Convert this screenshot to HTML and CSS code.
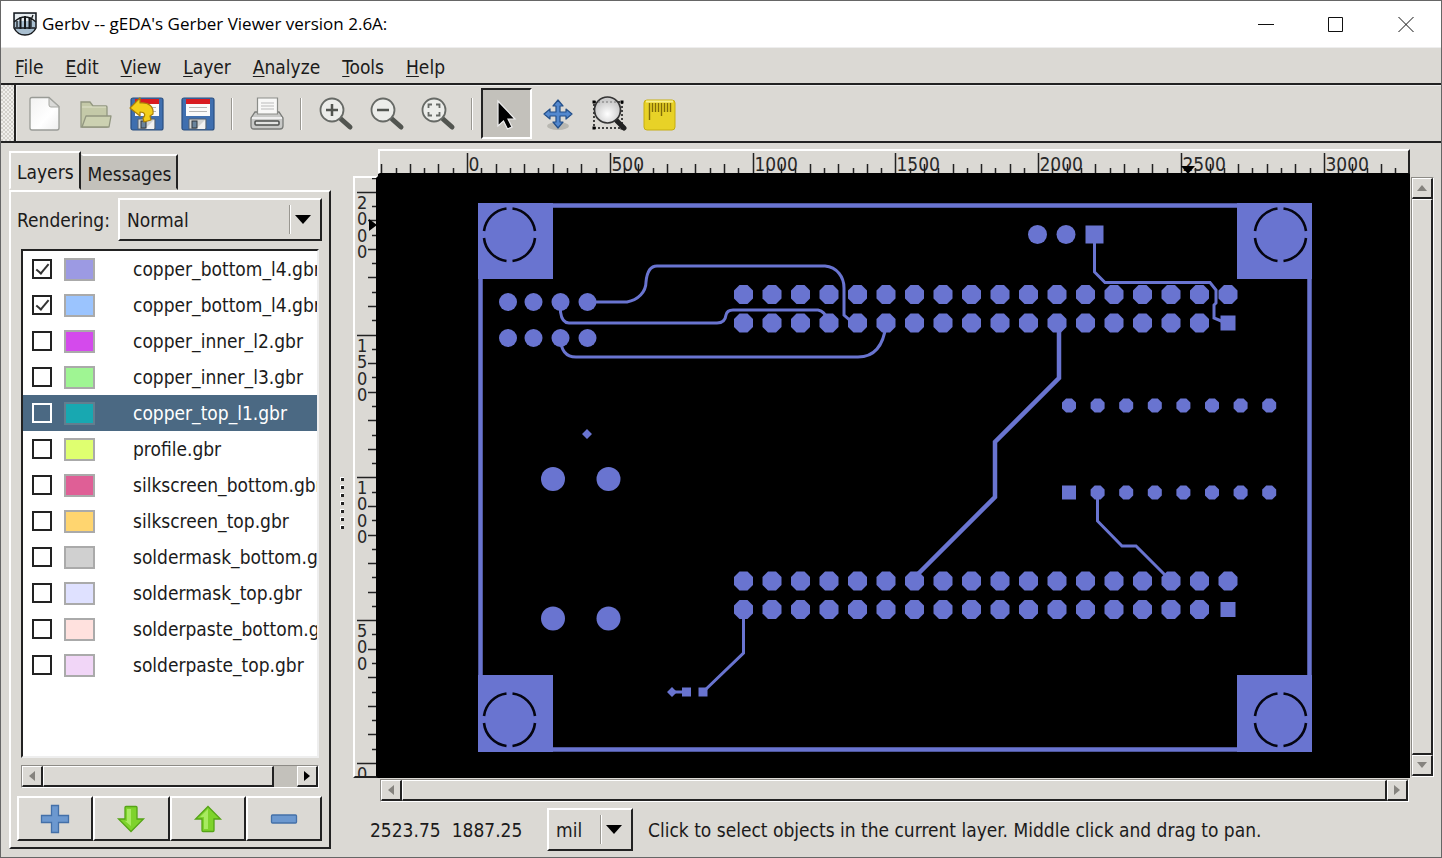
FILE: index.html
```html
<!DOCTYPE html>
<html lang="en">
<head>
<meta charset="utf-8">
<title>Gerbv</title>
<link rel="stylesheet" href="styles.css">
</head>
<body>
<div class="window">
  <header class="titlebar">
    <svg class="app-icon" width="24" height="24" viewBox="0 0 24 24"><path d="M1 1h22v15c-2 4-6 7-11 7S3 20 1 16z" fill="#a9bfd0" stroke="#16191c" stroke-width="1.5"/><path d="M2 2h20v7H2z" fill="#e8edf0"/><path d="M1 10Q12 0 23 10M2 16h20" stroke="#16191c" stroke-width="1.300" fill="none"/><path d="M7.500 5v12M12 4v13M16.500 5v12" stroke="#16191c" stroke-width="2"/><path d="M4 9v6M20 3l-2 5v7" stroke="#16191c" stroke-width="1.300" fill="none"/></svg>
    <h1 class="title">Gerbv -- gEDA's Gerber Viewer version 2.6A:</h1>
    <div class="window-buttons">
      <button aria-label="Minimize"><svg width="16" height="16"><path d="M0 8.500h16" stroke="#111"/></svg></button>
      <button aria-label="Maximize"><svg width="16" height="16"><path d="M.5 1.500h14v14H.5z" fill="none" stroke="#111"/></svg></button>
      <button aria-label="Close"><svg width="16" height="16"><path d="M.5 1l15 15M15.500 1l-15 15" stroke="#111"/></svg></button>
    </div>
  </header>
  <nav class="menubar">
    <button><u>F</u>ile</button><button><u>E</u>dit</button><button><u>V</u>iew</button><button><u>L</u>ayer</button><button><u>A</u>nalyze</button><button><u>T</u>ools</button><button><u>H</u>elp</button>
  </nav>
  <div class="toolbar">
    <span class="grip"></span>
    <div class="tools">
      <button aria-label="New"><svg width="36" height="36" viewBox="0 0 36 36"><defs><linearGradient id="paper" x1="0" y1="0" x2="1" y2="1"><stop offset="0" stop-color="#f2f2f1"/><stop offset=".6" stop-color="#fff"/><stop offset="1" stop-color="#eee"/></linearGradient></defs><path d="M5 1.500h17l10 9V32q0 2-2 2H5q-2 0-2-2V3.500q0-2 2-2z" fill="url(#paper)" stroke="#999b96" stroke-width="1.300"/><path d="M22 2v7q0 2 2 2h8z" fill="#dadad8" stroke="#a6a7a2"/></svg></button>
      <button aria-label="Open"><svg width="36" height="36" viewBox="0 0 36 36"><path d="M3 6h9l3 4h13q1 0 1 1v20H3z" fill="#c4c9a8" stroke="#929780" stroke-width="1.300"/><path d="M4 11h24" stroke="#dfe2ca"/><path d="M8 20h25l-2 11H4z" fill="#ccd1b1" stroke="#929780" stroke-width="1.300" stroke-linejoin="round"/></svg></button>
      <button aria-label="Revert"><svg width="36" height="36" viewBox="0 0 36 36"><use href="#disk"/><path d="M1 12L11 2v5c9-1 14 4 13 11l-3 2 1 4-7 2-1-4c3-3 2-6-3-6v4z" fill="#f4cf1a" stroke="#a87e08" stroke-width="1.200" stroke-linejoin="round"/></svg></button>
      <button aria-label="Save"><svg width="36" height="36" viewBox="0 0 36 36"><g id="disk"><rect x="2" y="2" width="32" height="32" rx="2" fill="#3f6faf" stroke="#294e80" stroke-width="1.200"/><path d="M6 3h24v5H6z" fill="#d81a20"/><path d="M6 8h24v12H6z" fill="#fafafa"/><path d="M9 11.500h18M9 15.500h18" stroke="#b5b5b5"/><path d="M9 23h17v10H9z" fill="#d3d5d4" stroke="#526171"/><path d="M16 33l9-9v9z" fill="#f2f2f1"/><rect x="12" y="25" width="5" height="7" fill="#68839c" stroke="#30373c"/></g></svg></button>
      <i class="sep"></i>
      <button aria-label="Print"><svg width="36" height="36" viewBox="0 0 36 36"><path d="M6 16h24l4 6v8q0 3-3 3H5q-3 0-3-3v-8z" fill="#c8c9c7" stroke="#797b78" stroke-width="1.300"/><path d="M8.500 2h20v16h-20z" fill="#f8f8f7" stroke="#8b8d89" stroke-width="1.200"/><path d="M12 7h13M12 10h13M12 13h13" stroke="#bbb"/><path d="M3 22h30" stroke="#eee" stroke-width="2"/><rect x="6" y="25" width="24" height="4" rx="1" fill="#e2e3e1" stroke="#4e504e" stroke-width="1.500"/></svg></button>
      <i class="sep"></i>
      <button aria-label="Zoom in"><svg width="36" height="36" viewBox="0 0 36 36"><g id="lens"><path d="M23 23l9 8" stroke="#525550" stroke-width="5" stroke-linecap="round"/><circle cx="14" cy="14" r="11.500" fill="#ecedea" stroke="#676a66" stroke-width="1.800"/></g><path d="M8 14h12M14 8v12" stroke="#525550" stroke-width="2.500"/></svg></button>
      <button aria-label="Zoom out"><svg width="36" height="36" viewBox="0 0 36 36"><use href="#lens"/><path d="M8 14h12" stroke="#525550" stroke-width="2.500"/></svg></button>
      <button aria-label="Zoom to fit"><svg width="36" height="36" viewBox="0 0 36 36"><use href="#lens"/><path d="M8.500 12V8.500H12M16 8.500h3.500V12M19.500 16v3.500H16M12 19.500H8.500V16" fill="none" stroke="#676a66" stroke-width="1.800"/></svg></button>
      <i class="sep"></i>
      <button class="active" aria-label="Select" aria-pressed="true"><svg width="36" height="36" viewBox="0 0 36 36"><path d="M9 5v25l5.500-5 4 8 4.500-2-4-8h7z" fill="#000" stroke="#eee" stroke-width="1.200"/></svg></button>
      <button aria-label="Pan"><svg width="36" height="36" viewBox="0 0 36 36"><ellipse cx="18" cy="30" rx="11" ry="4" fill="#b8b7b1"/><path d="M18 4l5 6h-3v6h6v-3l6 5-6 5v-3h-6v6h3l-5 6-5-6h3v-6h-6v3l-6-5 6-5v3h6v-6h-3z" fill="#5388ce" stroke="#234f89" stroke-width="1.200" stroke-linejoin="round"/></svg></button>
      <button aria-label="Zoom area"><svg width="36" height="36" viewBox="0 0 36 36"><defs><radialGradient id="glass" cy=".65"><stop offset="0" stop-color="#fff"/><stop offset="1" stop-color="#ccc"/></radialGradient></defs><path d="M3 6h28v26H3z" fill="none" stroke="#111" stroke-width="1.500" stroke-dasharray="2 2"/><path d="M1.500 4.500h3v3h-3zM29.500 4.500h3v3h-3zM1.500 30.500h3v3h-3zM29.500 30.500h3v3h-3z"/><path d="M26 25l7 7" stroke="#222" stroke-width="5" stroke-linecap="round"/><circle cx="16.500" cy="14" r="13" fill="url(#glass)" stroke="#333" stroke-width="1.700"/><path d="M7 6h19" stroke="#777" stroke-dasharray="2 2"/></svg></button>
      <button aria-label="Measure"><svg width="36" height="36" viewBox="0 0 36 36"><rect x="2" y="4" width="31" height="30" rx="3" fill="#e8d227" stroke="#c7ae10"/><path d="M4 5.500h27" stroke="#f7ef8b" stroke-width="2"/><path d="M7.500 7v17M10.500 7v9M13.500 7v9M16.500 7v9M19.500 7v13M22.500 7v9M25.500 7v9M28.500 7v9" stroke="#806b09" stroke-width="1.400"/></svg></button>
    </div>
  </div>
  <main class="workspace">
    <aside class="sidebar">
      <div class="tabs" role="tablist"><button class="tab selected" role="tab" aria-selected="true">Layers</button><button class="tab" role="tab">Messages</button></div>
      <section class="panel">
        <div class="rendering"><label for="mode">Rendering:</label><div class="combo wide"><select id="mode"><option>Normal</option></select></div></div>
        <ul class="layers">
          <li><input type="checkbox" id="l1" checked><span class="swatch lavender"></span><label for="l1">copper_bottom_l4.gbr</label></li>
          <li><input type="checkbox" id="l2" checked><span class="swatch sky"></span><label for="l2">copper_bottom_l4.gbr</label></li>
          <li><input type="checkbox" id="l3"><span class="swatch magenta"></span><label for="l3">copper_inner_l2.gbr</label></li>
          <li><input type="checkbox" id="l4"><span class="swatch green"></span><label for="l4">copper_inner_l3.gbr</label></li>
          <li class="current"><input type="checkbox" id="l5"><span class="swatch teal"></span><label for="l5">copper_top_l1.gbr</label></li>
          <li><input type="checkbox" id="l6"><span class="swatch lime"></span><label for="l6">profile.gbr</label></li>
          <li><input type="checkbox" id="l7"><span class="swatch rose"></span><label for="l7">silkscreen_bottom.gbr</label></li>
          <li><input type="checkbox" id="l8"><span class="swatch amber"></span><label for="l8">silkscreen_top.gbr</label></li>
          <li><input type="checkbox" id="l9"><span class="swatch gray"></span><label for="l9">soldermask_bottom.gbr</label></li>
          <li><input type="checkbox" id="l10"><span class="swatch ice"></span><label for="l10">soldermask_top.gbr</label></li>
          <li><input type="checkbox" id="l11"><span class="swatch blush"></span><label for="l11">solderpaste_bottom.gbr</label></li>
          <li><input type="checkbox" id="l12"><span class="swatch lilac"></span><label for="l12">solderpaste_top.gbr</label></li>
        </ul>
        <div class="scroll horizontal list-scroll"><button aria-label="Scroll left"><i class="arrow left"></i></button><span class="thumb"></span><span class="rest"></span><button aria-label="Scroll right"><i class="arrow right dark"></i></button></div>
        <div class="actions">
          <button aria-label="Add layer"><svg width="30" height="30" viewBox="0 0 30 30"><path d="M11.500 1.500h7v10h10v7h-10v10h-7v-10h-10v-7h10z" fill="#6c98cf" stroke="#4470a8" stroke-width="1.300"/></svg></button>
          <button aria-label="Move down"><svg width="30" height="30" viewBox="0 0 30 30"><path id="down" d="M9 3.500q0-1 1-1h10q1 0 1 1V15h6.500L15 27.500 2.500 15H9z" fill="#7ed32c" stroke="#55a416" stroke-width="1.300"/><path d="M11 5h4v17l-6-5h2z" fill="#a8ea61"/></svg></button>
          <button aria-label="Move up"><svg width="30" height="30" viewBox="0 0 30 30"><g transform="rotate(180 15 15)"><use href="#down"/></g><path d="M15 5l-8 8h4v12h4z" fill="#a8ea61"/></svg></button>
          <button aria-label="Remove layer"><svg width="30" height="30" viewBox="0 0 30 30"><rect x="2.500" y="11" width="25" height="8" rx="1" fill="#6c98cf" stroke="#4470a8" stroke-width="1.300"/></svg></button>
        </div>
      </section>
    </aside>
    <div class="splitter"><i></i><i></i><i></i><i></i><i></i><i></i><i></i></div>
    <section class="viewer">
      <svg class="ruler-x" id="ruler-x"></svg>
      <svg class="ruler-y" id="ruler-y"></svg>
      <svg class="board" id="board">
        <g transform="translate(-378 -174)" fill="#6974d0">
          <path d="M480.500 205.500h829v544h-829z" fill="none" stroke="#6974d0" stroke-width="4.500"/>
          <path d="M478 203h75v76h-75zM1237 203h75v76h-75zM478 675h75v77h-75zM1237 675h75v77h-75z"/>
          <g fill="none" stroke="#050510" stroke-width="2.600">
            <path id="hole" d="M512.500 208.500A26 26 0 0 1 535 231M535 238A26 26 0 0 1 512.500 261M506.500 261A26 26 0 0 1 484 238M484 231A26 26 0 0 1 506.500 208.500"/>
            <use href="#hole" x="771"/><use href="#hole" y="485"/><use href="#hole" x="771" y="485"/>
          </g>
          <g fill="none" stroke="#6974d0" stroke-width="3">
            <path d="M588 302h39C638 300 646 292 646 282C647 271 651 266 657 266H825C837 267 844 277 844 288V315L853 323"/>
            <path d="M560.500 302V312Q562 323 569 323H717Q725 323 726 315Q727 310 733 310H818Q825 311 828 321"/>
            <path d="M560.500 338Q561 357 576 357H858Q882 357 886 325"/>
            <path d="M1094.500 234V272L1105 282.500H1210L1216 290V303L1214 305V318L1226 323"/>
            <path d="M1097.500 492V521L1122 546H1136L1171 581M743.500 609V653L703 692M672 692h14"/>
            <path d="M1059 323V378L995 442V497L914 578" stroke-width="4.500"/>
          </g>
          <g id="pads"></g>
          <path d="M587 429l5 5-5 5-5-5zM672 687l5 5-5 5-5-5zM682 687.500h9v9h-9zM698.500 687.500h9v9h-9zM1085.500 225.500h18v18h-18zM1062 485.500h14v14h-14z"/>
        </g>
      </svg>
      <div class="scroll vertical"><button aria-label="Scroll up"><i class="arrow up"></i></button><span class="thumb"></span><button aria-label="Scroll down"><i class="arrow down"></i></button></div>
      <div class="scroll horizontal view-scroll"><button aria-label="Scroll left"><i class="arrow left"></i></button><span class="thumb"></span><button aria-label="Scroll right"><i class="arrow right"></i></button></div>
      <footer class="status"><output class="coords"><span>2523.75</span><span>1887.25</span></output><div class="combo"><select aria-label="Units"><option>mil</option></select></div><p>Click to select objects in the current layer. Middle click and drag to pan.</p></footer>
    </section>
  </main>
</div>
<script src="view.js"></script>
</body>
</html>
```
FILE: styles.css
```css
* { box-sizing: border-box; }
body { margin: 0; font: 19px/24px "DejaVu Sans Condensed", "Noto Sans", sans-serif; color: #1b1b1b; }
button, select, input { font: inherit; color: inherit; margin: 0; padding: 0; }
button { background: none; border: 0; }
svg { display: block; }
.window { height: 100vh; min-height: 858px; display: flex; flex-direction: column; background: #dbd9d4; border: 1px solid #666; }
.titlebar { height: 46px; background: #fff; display: flex; align-items: center; padding-left: 12px; }
.title { flex: 1; margin: 0 0 0 5px; font: 17px/24px "Open Sans", sans-serif; color: #000; }
.window-buttons { display: flex; }
.window-buttons button { width: 70px; height: 40px; display: grid; place-items: center; }
.menubar { height: 38px; border-bottom: 2px solid #222; border-top: 1px solid #eee; display: flex; align-items: center; gap: 22px; padding: 3px 0 0 14px; }
.menubar u { text-underline-offset: 2px; }
.toolbar { height: 58px; display: flex; border-bottom: 2px solid #222; }
.grip { width: 15px; border-right: 2px solid #222; background: repeating-conic-gradient(#d2d0cb 0 25%, #efeeec 0 50%) 0 0 / 4px 4px; }
.tools { flex: 1; display: flex; align-items: center; padding-left: 2px; border-top: 1px solid #eee; border-left: 1px solid #eee; }
.tools button { width: 51px; height: 51px; display: grid; place-items: center; }
.tools .active { background: #c3c1bb; border: 2px solid; border-color: #222 #fff #fff #222; }
.sep { width: 2px; height: 32px; margin: 0 8px; background: linear-gradient(90deg, #999791 50%, #fff 50%); }
.workspace { flex: 1; display: flex; min-height: 0; padding: 6px 0 0 8px; }
.sidebar { width: 322px; display: flex; flex-direction: column; padding-bottom: 8px; }
.tabs { display: flex; height: 41px; align-items: flex-end; padding-top: 2px; }
.tab { height: 36px; padding: 3px 5px 0; background: #c3c1bb; border: 2px solid; border-color: #fff #222 #c3c1bb #c3c1bb; }
.tab.selected { height: 39px; background: #dbd9d4; border-color: #fff #222 #dbd9d4 #fff; padding-left: 6px; }
.panel { flex: 1; display: flex; flex-direction: column; border: 2px solid; border-color: #fff #222 #222 #fff; padding: 6px 7px 6px 6px; }
.rendering { display: flex; align-items: center; gap: 8px; }
.combo { position: relative; width: 86px; height: 43px; border: 2px solid; border-color: #fff #222 #222 #fff; }
.combo.wide { flex: 1; }
.combo select { appearance: none; width: 100%; height: 100%; background: none; border: 0; padding-left: 7px; }
.combo::before { content: ""; position: absolute; right: 29px; top: 5px; bottom: 5px; width: 2px; background: linear-gradient(90deg, #999791 50%, #fff 50%); pointer-events: none; }
.combo::after { content: ""; position: absolute; right: 9px; top: 15px; border: 8px solid transparent; border-top: 9px solid #000; border-bottom: 0; pointer-events: none; }
.layers { flex: 1; list-style: none; margin: 8px 3px 7px 4px; padding: 0; background: #fff; border: 2px solid; border-color: #222 #eee #eee #222; overflow: hidden; }
.layers li { height: 36px; display: flex; align-items: center; padding-left: 9px; white-space: nowrap; }
.layers input { appearance: none; flex: none; width: 20px; height: 20px; border: 2px solid #222; margin-right: 12px; display: grid; place-items: center; }
.layers input:checked::before { content: ""; width: 11px; height: 5px; border: solid #333; border-width: 0 0 2px 2px; transform: rotate(-50deg); margin-bottom: 3px; }
.swatch { flex: none; width: 31px; height: 23px; border: 2px solid #aaa; margin-right: 38px; }
.lavender { background: #9c9ae3; } .sky { background: #9bc4fe; } .magenta { background: #d44aec; }
.green { background: #9ff593; } .teal { background: #18a8b1; } .lime { background: #dfff70; }
.rose { background: #df5f96; } .amber { background: #ffd56f; } .gray { background: #d0d0d0; }
.ice { background: #dfe1ff; } .blush { background: #ffe1de; } .lilac { background: #f1d6f7; }
.current { background: #4b6983; color: #fff; }
.current input { border-color: #fff; }
.current .swatch { border-color: #627e8f; }
.scroll { display: flex; background: #c3c1bb; border: 1px solid; border-color: #8d8b86 #fff #fff #8d8b86; }
.scroll button, .thumb { background: #dbd9d4; border: solid; border-width: 1px 2px 2px 1px; border-color: #fff #222 #222 #fff; }
.scroll button { flex: none; width: 21px; height: 21px; display: grid; place-items: center; }
.thumb { flex: 1; }
.rest { width: 23px; }
.vertical { flex-direction: column; }
.list-scroll { height: 23px; margin: 0 3px 0 4px; }
.arrow { border: 5px solid transparent; }
.left { border-right: 6px solid #85837e; border-left: 0; }
.right { border-left: 6px solid #85837e; border-right: 0; }
.right.dark { border-left-color: #000; }
.up { border-bottom: 6px solid #85837e; border-top: 0; }
.down { border-top: 6px solid #85837e; border-bottom: 0; }
.actions { display: flex; height: 45px; margin-top: 8px; }
.actions button { flex: 1; display: grid; place-items: center; border: 2px solid; border-color: #fff #222 #222 #fff; }
.splitter { width: 22px; display: flex; flex-direction: column; align-items: center; justify-content: center; gap: 4px; }
.splitter i { width: 4px; height: 4px; background: #222; border: solid #fff; border-width: 1px 0 0 1px; }
.viewer { flex: 1; min-width: 0; display: grid; grid-template-columns: 25px 1fr 31px; grid-template-rows: 25px 1fr 25px 54px; }
.ruler-x, .ruler-y { overflow: hidden; width: 100%; height: 100%; border: 2px solid #fff; }
.ruler-x { grid-area: 1 / 2; border-color: #fff #222 #000 #fff; border-bottom-width: 1px; }
.ruler-y { grid-area: 2 / 1; border-color: #fff #000 #222 #fff; margin-top: 2px; height: calc(100% - 2px); }
.ruler-x text, .ruler-y text { font: 19px "DejaVu Sans Condensed", "Noto Sans", sans-serif; fill: #282828; }
.ruler-y text { font-size: 18px; }
.board { grid-area: 2 / 2; width: 100%; height: 100%; background: #000; }
.vertical { grid-area: 2 / 3; width: 23px; margin: 3px 0 1px 1px; }
.vertical .thumb { width: 21px; }
.view-scroll { grid-area: 3 / 2; height: 23px; margin: 1px 1px 1px 2px; }
.status { grid-area: 4 / 1 / auto / -1; display: flex; align-items: center; padding: 0 0 1px 17px; white-space: nowrap; }
.coords { display: flex; gap: 11px; width: 177px; }
.status p { margin: 0 0 0 15px; }
```
FILE: view.js
```js
const NS = "http://www.w3.org/2000/svg";
const STEP = 14.28;

function add(parent, tag, attrs, text) {
  const node = document.createElementNS(NS, tag);
  for (const name in attrs) node.setAttribute(name, attrs[name]);
  if (text) node.textContent = text;
  parent.append(node);
}

function tickLength(i) {
  return i % 10 === 0 ? 20 : i % 2 === 0 ? 9 : 5;
}

// Horizontal scale: zero lies 88px from the left edge.
const rx = document.getElementById("ruler-x");
let d = "";
for (let i = -6; i < 66; i++) {
  const x = Math.round(88 + i * STEP) - 0.5;
  d += `M${x} 22v${-tickLength(i)}`;
  if (i >= 0 && i % 10 === 0) add(rx, "text", { x: x + 1, y: 20 }, String(i * 50));
}
add(rx, "path", { d, stroke: "#222", "stroke-width": 1.5 });
add(rx, "path", { d: "M801 15h14l-7 8z" });

// Vertical scale: digits are stacked below each major tick.
const ry = document.getElementById("ruler-y");
d = "";
for (let i = 0; i < 42; i++) {
  const y = Math.round(586 - i * STEP) - 0.5;
  d += `M22 ${y}h${-tickLength(i)}`;
  if (i % 10 === 0) [...String(i * 50)].forEach((c, n) => add(ry, "text", { x: 2, y: y + 16 + n * 16.5 }, c));
}
add(ry, "path", { d, stroke: "#222", "stroke-width": 1.5 });
add(ry, "path", { d: "M14 41v12l8-6z" });

const pads = document.getElementById("pads");
function octagon(x, y, r) {
  const k = r * 0.42;
  add(pads, "path", { d: `M${x - k} ${y - r}h${2 * k}L${x + r} ${y - k}v${2 * k}L${x + k} ${y + r}h${-2 * k}L${x - r} ${y + k}v${-2 * k}z` });
}
for (const y of [294.5, 323, 581, 609.5]) {
  for (let i = 0; i < 18; i++) {
    const x = 743.5 + i * 28.5;
    if (i === 17 && (y === 323 || y === 609.5)) add(pads, "rect", { x: x - 7.5, y: y - 7.5, width: 15, height: 15 });
    else octagon(x, y, 9.5);
  }
}
for (const y of [405.5, 492.5])
  for (let i = y > 450 ? 1 : 0; i < 8; i++) octagon(1069 + i * 28.6, y, 7);
const rounds = [[1037.5, 234.5, 9.5], [1066, 234.5, 9.5]];
for (const x of [508, 533.5, 560.5, 587.5]) rounds.push([x, 302, 9], [x, 338, 9]);
for (const x of [553, 608.5]) rounds.push([x, 479, 12], [x, 618.5, 12]);
for (const [cx, cy, r] of rounds) add(pads, "circle", { cx, cy, r });
```
